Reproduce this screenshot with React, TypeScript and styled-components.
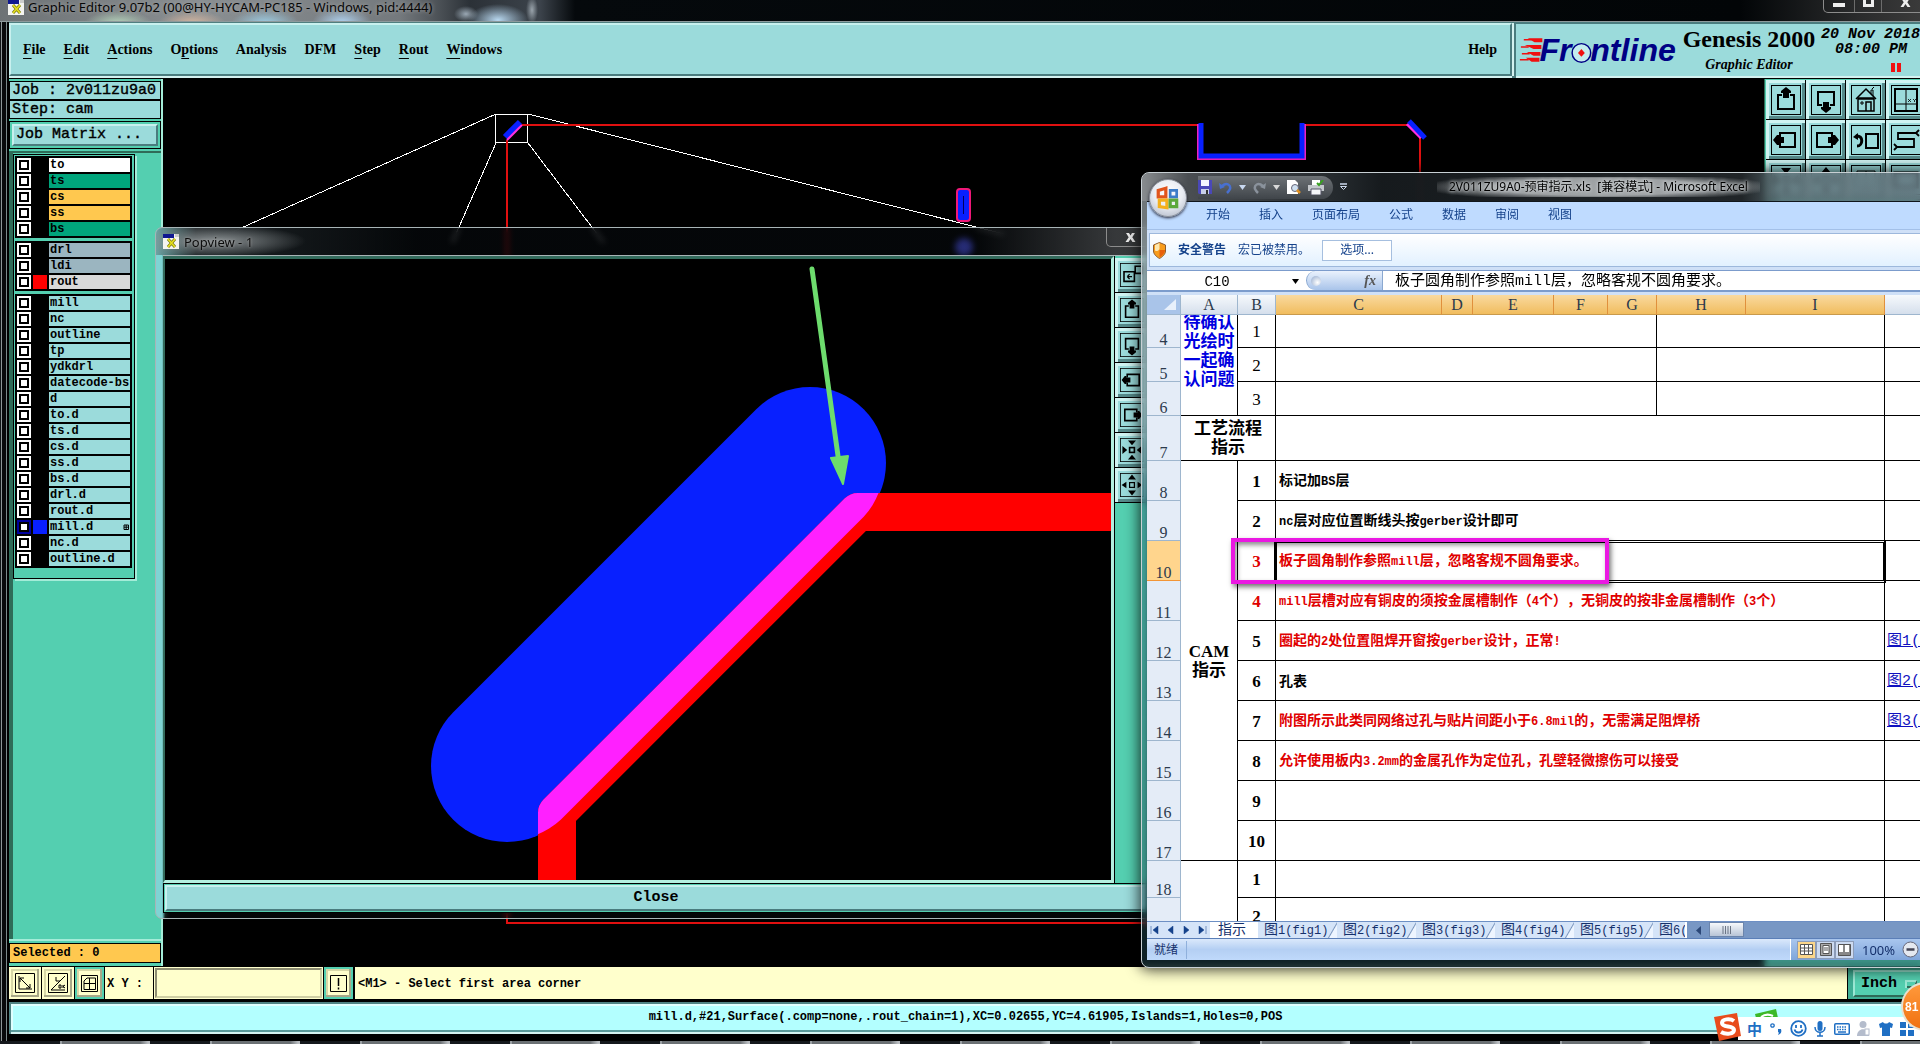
import React, { ReactNode } from 'react';
import styled, { createGlobalStyle, css } from 'styled-components';

const mono = `"Liberation Mono", monospace`;
const serif = `"Liberation Serif", serif`;
const ui = `"Noto Sans", "Noto Sans CJK SC", sans-serif`;
const song = `"Liberation Mono", "Noto Sans CJK SC", monospace`;

const aqua = '#9bdbdb';
const teal = '#54cfb0';
const cream = '#ffffcc';

const Global = createGlobalStyle`
  *, *::before, *::after { box-sizing: border-box; }
  body { margin: 0; background: #000; overflow: hidden; }
  button, input, select { margin: 0; border-radius: 0; }
`;

/* ---------- main window ---------- */

const Desktop = styled.div`
  position: relative;
  height: 100vh;
  overflow: hidden;
  display: flex;
  flex-direction: column;
  background: #04070a;
`;

const TitleBar = styled.header`
  flex: none;
  height: 22px;
  padding: 0 0 6px 8px;
  display: flex;
  align-items: flex-start;
  gap: 4px;
  border-bottom: 1px solid #8e9a9c;
  background:
    radial-gradient(ellipse 34px 14px at 118px 24px, #b7d6bd, transparent),
    radial-gradient(ellipse 34px 14px at 192px 24px, #d8b7a0, transparent),
    radial-gradient(ellipse 34px 16px at 265px 24px, #9ed0e8, transparent),
    radial-gradient(ellipse 30px 18px at 342px 24px, #b4d8f8, transparent),
    radial-gradient(ellipse 30px 16px at 498px 20px, #b8d8f0, transparent),
    radial-gradient(ellipse 12px 8px at 466px 14px, #9aa8b4, transparent),
    radial-gradient(ellipse 6px 14px at 532px 10px, #9aa4ac, transparent),
    linear-gradient(90deg, #6d7275 0, #8a8f92 200px, #74797d 400px, #2b3137 470px, #3c434b 540px, #05090c 575px, #020507 calc(100% - 180px), #2a2b2c calc(100% - 60px), #3a3a3a 100%);
`;

const TitleText = styled.span`
  flex: 1;
  font: 13px/14px ${ui};
  color: #060606;
  white-space: pre;
  text-shadow: 0 0 4px #aaa;
`;

const CaptionButtons = styled.div`
  display: flex;
  height: 13px;
  margin-right: -10px;
  border: 1px solid #8c8c8c;
  border-top: 0;
  border-radius: 0 0 5px 5px;
`;

const CaptionButton = styled.button<{ $w: number }>`
  width: ${p => p.$w}px;
  padding: 0;
  border: 0;
  border-left: 1px solid #6c6c6c;
  background: transparent;
  color: #eee;
  display: flex;
  align-items: flex-start;
  justify-content: center;
  &:first-child { border-left: 0; }
`;

const WindowBody = styled.main`
  flex: 1;
  min-height: 0;
  display: flex;
  flex-direction: column;
  padding: 0 0 7px 9px;
  background: linear-gradient(90deg, #101416 0 1px, #8e9698 1px 2px, #08090b 2px 6px, #7d8a8c 6px 7px, #000 7px);
`;

const Head = styled.div`
  flex: none;
  height: 57px;
  display: flex;
  background: #4f7f80;
  border-bottom: 1px solid #000;
`;

const raised = css`
  border-style: solid;
  border-width: 2px;
  border-color: #c8f0ee #4a7c7e #4a7c7e #c8f0ee;
`;

const MenuBar = styled.nav`
  flex: 1;
  min-width: 0;
  display: flex;
  align-items: center;
  gap: 18px;
  padding: 0 13px 0 12px;
  margin: 1px 2px 2px 0;
  background: ${aqua};
  ${raised}
  box-shadow: 0 2px 0 #d4f2f0, 2px 0 0 #d4f2f0;
`;

const MenuItem = styled.button<{ $end?: boolean }>`
  padding: 0;
  border: 0;
  background: transparent;
  color: #000;
  font: bold 14px/20px ${serif};
  margin-left: ${p => (p.$end ? 'auto' : '0')};
  u { text-underline-offset: 4px; text-decoration-thickness: 1px; }
`;

const Brand = styled.section`
  flex: none;
  width: 406px;
  display: flex;
  overflow: hidden;
  background: ${aqua};
  border: 2px solid #4a7c7e;
  border-width: 2px 0 0 2px;
  box-shadow: inset 0 -2px 0 #d4f2f0;
`;

const BrandTitle = styled.div`
  flex: none;
  width: 138px;
  display: flex;
  flex-direction: column;
  align-items: center;
  color: #000;
  strong { font: bold 24px/30px ${serif}; }
  em { font: italic bold 14px/22px ${serif}; }
`;

const Clock = styled.time`
  display: flex;
  flex-direction: column;
  padding: 3px 0 0 3px;
  font: italic bold 15px/15px ${mono};
  color: #000;
  white-space: nowrap;
  span:nth-child(2) { padding-left: 14px; }
  svg { margin: 6px 0 0 70px; }
`;

const Work = styled.div`
  flex: 1;
  min-height: 0;
  display: grid;
  grid-template-columns: 154px minmax(0, 1fr) 156px;
`;

const Sidebar = styled.aside`
  display: flex;
  flex-direction: column;
  min-height: 0;
  background: ${teal};
  border-right: 2px solid #a4ecd8;
`;

const Info = styled.div`
  height: 19px;
  padding-left: 2px;
  border: 1px solid #000;
  background: ${aqua};
  font: 15px/18px ${mono};
  -webkit-text-stroke: 0.4px #000;
  white-space: nowrap;
  overflow: hidden;
  &:first-child { margin-top: 2px; }
`;

const MatrixFrame = styled.div`
  margin: 2px 0;
  padding: 2px;
  border: 1px solid #000;
`;

const MatrixButton = styled.button`
  display: block;
  width: 100%;
  height: 22px;
  padding: 0 2px;
  ${raised}
  background: ${aqua};
  font: 15px/18px ${mono};
  -webkit-text-stroke: 0.4px #000;
  color: #000;
  text-align: left;
`;

const Tray = styled.div`
  flex: 1;
  border-top: 2px solid #2f6b58;
  border-left: 4px solid #2f6b58;
  padding-top: 1px;
`;

const LayerFrame = styled.div`
  width: 122px;
  height: 425px;
  border: 1px solid #000;
  padding: 1px;
  display: flex;
  flex-direction: column;
  gap: 3px;
  box-shadow: 2px 2px 0 #a4ecd8;
`;

const LayerGroup = styled.ul`
  list-style: none;
  margin: 0;
  width: 117px;
  padding: 1px 0;
  background: #000;
`;

const LayerRow = styled.li`
  display: flex;
  align-items: center;
  height: 16px;
  padding-left: 2px;
  gap: 2px;
`;

const LayerCheck = styled.input<{ $on?: boolean }>`
  appearance: none;
  flex: none;
  width: 14px;
  height: 14px;
  border: 2px solid ${p => (p.$on ? '#0000a0' : '#fff')};
  background: #fff;
  box-shadow: inset 0 0 0 2px #000;
`;

const Swatch = styled.span<{ $c: string }>`
  flex: none;
  width: 14px;
  height: 14px;
  background: ${p => p.$c};
`;

const LayerName = styled.label<{ $c: string }>`
  width: 81px;
  height: 14px;
  padding-left: 1px;
  display: flex;
  align-items: center;
  justify-content: space-between;
  background: ${p => p.$c};
  font: bold 12px/14px ${mono};
  color: #000;
`;

const Selected = styled.div`
  height: 20px;
  margin: 2px 0 3px;
  padding-left: 3px;
  border: 1px solid #000;
  background: #ffc84f;
  font: bold 12px/18px ${mono};
`;

const TrayEdge = styled.div`
  height: 2px;
  background: #a4ecd8;
`;

const Canvas = styled.svg`
  display: block;
  width: 100%;
  height: 100%;
  background: #000;
`;

const ToolGrid = styled.div`
  overflow: hidden;
  padding: 1px 0 0 1px;
  border-left: 1px solid #2f6b58;
  background: ${teal};
  display: grid;
  grid-template-columns: repeat(4, 40px);
  grid-auto-rows: 40px;
`;

const ToolButton = styled.button<{ $s: number }>`
  width: ${p => p.$s}px;
  height: ${p => p.$s}px;
  padding: 0;
  border: 1px solid #000;
  border-width: 0 1px 1px 0;
  background: ${aqua};
  box-shadow: inset 3px 3px 0 #d0f4f2, inset -3px -3px 0 #568a8a;
  display: flex;
  align-items: center;
  justify-content: center;
  color: #000;
`;

/* ---------- command and status lines ---------- */

const CommandRow = styled.form`
  flex: none;
  height: 35px;
  margin: 0;
  display: flex;
  gap: 1px;
  padding: 1px 0 2px;
  background: #000;
`;

const CommandButton = styled.button<{ $green?: boolean }>`
  width: ${p => (p.$green ? 29 : 32)}px;
  padding: 0;
  border: 2px solid ${p => (p.$green ? teal : cream)};
  background: ${cream};
  box-shadow: inset -2px -2px 0 #a8a888, inset 2px 2px 0 #d8d8a8;
  display: flex;
  align-items: center;
  justify-content: center;
  color: #000;
`;

const CoordLabel = styled.label`
  width: 48px;
  padding-left: 2px;
  background: ${cream};
  font: bold 12px/34px ${mono};
  white-space: pre;
`;

const CoordField = styled.input`
  width: 169px;
  padding: 0 4px;
  border: 3px solid #8c8c70;
  border-color: #8c8c70 #cfcfa4 #cfcfa4 #8c8c70;
  outline: 1px solid ${cream};
  outline-offset: -1px;
  background: ${cream};
  font: 12px/20px ${mono};
`;

const Prompt = styled.output`
  flex: 1;
  min-width: 0;
  padding-left: 3px;
  margin-left: 1px;
  background: ${cream};
  font: bold 12px/34px ${mono};
`;

const UnitBox = styled.label`
  position: relative;
  width: 72px;
  display: flex;
  padding: 3px 0 2px 5px;
  background: #3fae94;
  svg { position: absolute; right: 3px; top: 13px; }
`;

const UnitSelect = styled.select`
  appearance: none;
  width: 100%;
  padding: 0 0 0 6px;
  border: 2px solid #9be8d4;
  border-bottom-color: #2f6b58;
  border-right: 0;
  background: ${teal};
  color: #000;
  font: bold 15px/20px ${mono};
`;

const StatusLine = styled.output`
  flex: none;
  height: 32px;
  margin: 1px 0 0;
  display: block;
  border: 2px solid #4f8384;
  border-right: 0;
  border-bottom: 0;
  background: #b3ffff;
  box-shadow: inset 0 -2px 0 #d4f2f0, inset 0 -4px 0 #5a9a9a, inset 2px 2px 0 #e0ffff;
  font: bold 12px/26px ${mono};
  text-align: center;
  color: #000;
`;

const Taskbar = styled.footer`
  flex: none;
  height: 3px;
  background: repeating-linear-gradient(90deg, #14181c 0 60px, #9aa0a4 60px 62px, #6b7074 62px 140px, #b8bcc0 148px 150px);
`;

/* ---------- popview window ---------- */

const PopWindow = styled.section`
  position: absolute;
  left: 155px;
  top: 227px;
  bottom: 125px;
  width: 1003px;
  display: flex;
  flex-direction: column;
  padding: 0 8px 5px 7px;
  border: 1px solid #a8b4b6;
  border-radius: 7px;
  background: linear-gradient(90deg, #7fd4d4 0 6px, rgba(10, 16, 20, 0.35) 9px);
  backdrop-filter: blur(3px);
  overflow: hidden;
`;

const PopTitle = styled.header`
  flex: none;
  height: 27px;
  margin: 0 -8px 0 -7px;
  padding: 0 0 0 7px;
  display: flex;
  align-items: center;
  gap: 5px;
  background:
    radial-gradient(ellipse 90px 16px at 60px 13px, #8b9193, transparent),
    linear-gradient(90deg, #6ca4a4 0, #1d2326 40px, rgba(6, 9, 12, 0.35) 260px, rgba(6, 9, 12, 0.35) 820px, rgba(60, 62, 64, 0.9) 960px);
  span { flex: 1; font: 13px/16px ${ui}; color: #0c0c0c; text-shadow: 0 0 3px #aaa; }
`;

const PopClose = styled.button`
  align-self: flex-start;
  width: 48px;
  height: 19px;
  padding: 0;
  margin-right: 3px;
  border: 1px solid #8c8c8c;
  border-top: 0;
  border-radius: 0 0 5px 5px;
  background: transparent;
`;

const PopBody = styled.div`
  flex: 1;
  min-height: 0;
  display: flex;
  border-top: 1px solid #a8b4b6;
  background: ${teal};
`;

const PopView = styled.div`
  flex: 1;
  min-width: 0;
  border-style: solid;
  border-width: 3px;
  border-left-width: 2px;
  border-color: #336b5c #b4f0e0 #b4f0e0 #336b5c;
`;

const PopTools = styled.div`
  width: 35px;
  display: flex;
  flex-direction: column;
  padding-top: 2px;
  border-left: 1px solid #000;
`;

const PopFoot = styled.div`
  flex: none;
  height: 30px;
  padding: 1px;
  background: ${teal};
  border: 1px solid #000;
  button {
    display: block;
    width: 100%;
    height: 26px;
    padding: 0;
    background: ${aqua};
    ${raised}
    font: bold 15px/20px ${mono};
    color: #000;
  }
`;

/* ---------- spreadsheet window ---------- */

const XlWindow = styled.section`
  position: absolute;
  left: 1141px;
  right: -16px;
  top: 172px;
  bottom: 76px;
  display: flex;
  flex-direction: column;
  padding: 0 0 7px 5px;
  border: 1px solid #c8d0d4;
  border-radius: 8px;
  background: linear-gradient(180deg, rgba(150, 156, 160, 0.75) 0, rgba(140, 170, 175, 0.75) 240px, rgba(50, 120, 130, 0.55) 330px, rgba(30, 70, 80, 0.45) 100%);
  backdrop-filter: blur(3px);
  box-shadow: 0 0 14px 2px rgba(0, 0, 0, 0.75);
`;

const XlTitle = styled.header`
  flex: none;
  height: 28px;
  margin-left: -5px;
  padding-left: 56px;
  display: flex;
  align-items: center;
  border-radius: 8px 8px 0 0;
  background: linear-gradient(90deg, #888c8f 0, #4a4e52 46px, #23282c 200px, rgba(2, 6, 9, 0.82) 240px, rgba(2, 6, 9, 0.72) 600px, rgba(30, 60, 70, 0.4) 640px, rgba(40, 70, 85, 0.4) 100%);
`;

const Orb = styled.button`
  position: absolute;
  left: 7px;
  top: 6px;
  width: 38px;
  height: 38px;
  padding: 0;
  border: 1px solid #8a8f98;
  border-radius: 50%;
  background: radial-gradient(circle at 50% 35%, #fff 0, #e8ebf2 50%, #a8b0c0 100%);
  box-shadow: 0 1px 3px #223;
  display: flex;
  align-items: center;
  justify-content: center;
`;

const Quick = styled.div`
  width: 135px;
  height: 23px;
  display: flex;
  align-items: center;
  gap: 7px;
  border-radius: 0 12px 12px 0;
  background: linear-gradient(180deg, #6d7276, #40454a);
  button { padding: 0; border: 0; background: none; display: flex; }
`;

const XlName = styled.h1`
  margin: 0 0 0 90px;
  padding: 0 12px;
  font: 12px/20px ${ui};
  white-space: pre;
  color: #000;
  text-shadow: 0 0 5px #d8dcde, 0 0 3px #d8dcde;
  background: radial-gradient(ellipse 55% 70% at 50% 50%, rgba(200, 204, 206, 0.75) 60%, transparent 100%);
`;

const MoreMark = styled.span`
  display: flex;
  margin-left: 7px;
`;

const XlBody = styled.div`
  flex: 1;
  min-height: 0;
  display: flex;
  flex-direction: column;
  background: #cfe0f7;
  border-top: 1px solid #10161c;
`;

const Tabs = styled.nav`
  flex: none;
  height: 28px;
  padding: 0 0 2px 59px;
  display: flex;
  align-items: center;
  gap: 29px;
  background: #bfdbff;
  border-bottom: 1px solid #a3c0e8;
  button { padding: 0; border: 0; background: none; font: 12px/18px ${ui}; color: #15428b; }
`;

const Alert = styled.div`
  flex: none;
  height: 34px;
  margin: 3px 0 3px 2px;
  padding-left: 3px;
  display: flex;
  align-items: center;
  gap: 12px;
  border: 1px solid #9db8dc;
  background: linear-gradient(180deg, #fff, #e2f1ff);
  font: 12px/18px ${ui};
  color: #15428b;
  button {
    width: 70px;
    height: 21px;
    padding: 0;
    border: 1px solid #a6bfdf;
    background: #fff;
    color: #15428b;
    font: 12px/18px ${ui};
  }
`;

const FormulaBar = styled.div`
  flex: none;
  height: 22px;
  margin-bottom: 3px;
  display: flex;
  border: 1px solid #7c9ccc;
  border-width: 1px 0 2px;
  background: #fff;
`;

const NameBox = styled.input`
  width: 140px;
  padding: 2px 0 0;
  border: 0;
  background: #fff;
  text-align: center;
  font: 14px/18px ${mono};
`;

const FxPill = styled.button`
  width: 77px;
  margin-left: 4px;
  padding: 0 6px 0 4px;
  display: flex;
  align-items: center;
  justify-content: space-between;
  border: 1px solid #8aa8d0;
  border-width: 0 1px 0 1px;
  border-radius: 10px 0 0 10px;
  background: linear-gradient(180deg, #eaf2fd, #a9c4ea);
  font: italic bold 14px/16px ${serif};
  color: #555;
`;

const Knob = styled.i`
  width: 10px;
  height: 10px;
  border-radius: 50%;
  background: radial-gradient(circle at 65% 65%, #fff, #90a8cc);
`;

const FormulaField = styled.input`
  flex: 1;
  min-width: 0;
  padding: 2px 0 0 12px;
  border: 0;
  background: #fff;
  font: 15px/17px ${song};
  color: #000;
`;

const SheetArea = styled.div`
  position: relative;
  flex: 1;
  min-height: 0;
  overflow: hidden;
  background: #fff;
`;

const Grid = styled.table`
  table-layout: fixed;
  width: 797px;
  border-collapse: separate;
  border-spacing: 0;
  color: #000;
  text-spacing-trim: space-all;
`;

const ColHead = styled.th<{ $hot?: boolean }>`
  height: 20px;
  padding: 1px 0 0;
  font: 16px/18px ${serif};
  color: #2c3a4c;
  border-right: 1px solid ${p => (p.$hot ? '#e0903c' : '#9eb6ce')};
  border-bottom: 1px solid ${p => (p.$hot ? '#c99a4c' : '#9eb6ce')};
  background: ${p => (p.$hot ? 'linear-gradient(180deg, #f9d99f, #f1bd5e)' : 'linear-gradient(180deg, #f6f9fc, #d5dfec)')};
`;

const CornerHead = styled.th`
  padding: 0 4px 0 0;
  border-bottom: 1px solid #9eb6ce;
  border-right: 1px solid #9eb6ce;
  background: #a9c4e9;
  text-align: right;
  svg { display: block; margin-left: auto; }
`;

const RowHead = styled.th<{ $h: number; $hot?: boolean }>`
  height: ${p => p.$h}px;
  padding: 0;
  vertical-align: bottom;
  font: 16px/14px ${serif};
  color: #2c3a4c;
  background: ${p => (p.$hot ? '#ffd58d' : '#e4ecf7')};
  border-right: 1px solid #9eb6ce;
  border-bottom: 1px solid ${p => (p.$hot ? '#f29536' : '#9eb6ce')};
`;

const Cell = styled.td<{ $red?: boolean }>`
  padding: 2px 0 0 3px;
  border-right: 1px solid #000;
  border-bottom: 1px solid #000;
  font: bold 14px/20px ${song};
  color: ${p => (p.$red ? '#e00000' : '#000')};
  white-space: nowrap;
  overflow: hidden;
`;

const NumCell = styled(Cell)<{ $plain?: boolean }>`
  padding: 2px 0 0;
  text-align: center;
  font: ${p => (p.$plain ? 'normal' : 'bold')} 17px/20px ${serif};
`;

const GroupCell = styled(Cell)<{ $blue?: boolean }>`
  padding: 0;
  text-align: center;
  white-space: normal;
  vertical-align: ${p => (p.$blue ? 'top' : 'middle')};
  font: bold 17px/19px "Liberation Serif", "Noto Sans CJK SC", serif;
  color: ${p => (p.$blue ? '#0000e0' : '#000')};
`;

const ScrolledText = styled.div`
  margin-top: -2px;
`;

const LinkCell = styled(Cell)`
  padding-left: 2px;
  border-right: 0;
  font-weight: normal;
  font-size: 15px;
  a { color: #1010c0; }
`;

const Latin = styled.span`
  font-size: 12px;
`;

const Selection = styled.div`
  position: absolute;
  left: 127px;
  top: 245px;
  width: 612px;
  height: 43px;
  border: 3px double #000;
`;

const Callout = styled.div`
  position: absolute;
  left: 84px;
  top: 243px;
  width: 378px;
  height: 46px;
  border: 4px solid #ea18e2;
  box-shadow: 2px 3px 5px rgba(0, 0, 0, 0.55), inset 2px 3px 5px rgba(0, 0, 0, 0.45);
`;

const SheetBar = styled.div`
  flex: none;
  height: 17px;
  display: flex;
  background: #7897c4;
  border-top: 1px solid #6d8fc4;
  overflow: hidden;
`;

const SheetNav = styled.div`
  width: 63px;
  display: flex;
  align-items: center;
  justify-content: space-around;
  background: #d5e4f8;
  button { padding: 0; border: 0; background: none; display: flex; }
`;

const SheetTab = styled.button<{ $on?: boolean }>`
  flex: none;
  width: ${p => (p.$on ? 48 : 79)}px;
  padding: 1px 0 0 ${p => (p.$on ? 8 : 6)}px;
  border: 0;
  text-align: left;
  white-space: nowrap;
  font: 14px/15px ${song};
  color: #15306b;
  background: ${p => (p.$on ? '#fff' : 'linear-gradient(120deg, #d5e4f8 0 68px, #7c98c0 69px, #eef5ff 70px)')};
`;

const TabStrip = styled.div`
  width: 477px;
  display: flex;
  overflow: hidden;
  border-right: 2px solid #fff;
`;

const ScrollLeft = styled.button`
  width: 22px;
  padding: 0;
  border: 0;
  background: transparent;
  display: flex;
  align-items: center;
  justify-content: center;
`;

const ScrollThumb = styled.div`
  width: 35px;
  margin: 0 0 1px;
  border: 1px solid #6a84ac;
  background: linear-gradient(180deg, #f6f8fb, #b8c4d6);
  display: flex;
  align-items: center;
  justify-content: center;
`;

const XlStatus = styled.footer`
  flex: none;
  height: 22px;
  display: flex;
  align-items: center;
  background: linear-gradient(180deg, #dbe9fb, #b4cff3 50%, #bfd9fb);
  border-top: 1px solid #5b7fb8;
  font: 12px/18px ${ui};
  color: #15306b;
`;

const StatusWord = styled.span`
  width: 40px;
  padding-left: 7px;
  border-right: 1px solid #8fb0dc;
`;

const ViewTools = styled.div`
  margin-left: auto;
  width: 145px;
  height: 100%;
  padding-left: 6px;
  display: flex;
  align-items: center;
  border-left: 1px solid #fff;
  background: linear-gradient(180deg, #a9c6ee, #7fa5da);
  span { width: 48px; padding-left: 8px; font-size: 13px; }
`;

const ViewButton = styled.button<{ $on?: boolean }>`
  width: 19px;
  height: 18px;
  padding: 0;
  border: 1px solid #8c9cb8;
  background: ${p => (p.$on ? '#fbd68a' : '#ccdaf0')};
  display: flex;
  align-items: center;
  justify-content: center;
`;

/* ---------- input method bar ---------- */

const ImeBar = styled.div`
  position: absolute;
  right: 0;
  bottom: 4px;
  width: 182px;
  height: 23px;
  padding: 0 2px 0 6px;
  display: flex;
  align-items: center;
  justify-content: space-between;
  background: #fff;
  color: #1f6fc4;
  button { padding: 0; border: 0; background: none; width: 21px; display: flex; justify-content: center; color: inherit; font: bold 15px/20px "Noto Sans CJK SC", sans-serif; }
`;

const ImeLogo = styled.svg`
  position: absolute;
  right: 177px;
  bottom: 2px;
`;

const ImeLeaf = styled.svg`
  position: absolute;
  right: 141px;
  bottom: 26px;
`;

const Ball = styled.button`
  position: absolute;
  right: -30px;
  bottom: 13px;
  width: 49px;
  height: 49px;
  padding: 0 0 0 2px;
  border: 2px solid #e8e0d0;
  border-radius: 50%;
  background: linear-gradient(180deg, #ff9a3c, #f07010);
  color: #fff;
  text-align: left;
  font: bold 12px/20px "Liberation Sans", sans-serif;
`;

/* ---------- drawings ---------- */

const XIcon = () => (
  <svg width="16" height="15" viewBox="0 0 16 15">
    <rect width="16" height="15" fill="#f4f4f0" />
    <rect width="11" height="4" fill="#101890" />
    <rect x="12" width="4" height="3" fill="#ccc" />
    <path d="M5 5l7 8M12 5l-7 8" stroke="#7a7a10" strokeWidth="3" />
    <path d="M5 5l7 8M12 5l-7 8" stroke="#e6e020" strokeWidth="1.6" />
  </svg>
);

const CloseX = () => (
  <svg width="11" height="9" viewBox="0 0 11 9">
    <path d="M1 0h3l1.500 2.500L7 0h3L7.300 4.300 10.500 9h-3L5.500 6 3.500 9h-3l3.200-4.700z" fill="#eee" />
  </svg>
);

type Glyph = 'up' | 'down' | 'left' | 'right' | 'home' | 'xy' | 'undo' | 'snake' | 'in' | 'out' | 'pan' | 'bar' | 'copy';

const glyphs: Record<Glyph, ReactNode> = {
  up: <><path d="M11 10H7v14h16V10h-4" fill="none" stroke="currentColor" strokeWidth="2" /><path d="M15 2l5 4v2h-2v5h-6V8h-2V6z" fill="currentColor" /></>,
  down: <><path d="M11 20H7V7h16v13h-4" fill="none" stroke="currentColor" strokeWidth="2" /><path d="M15 28l5-4v-2h-2v-5h-6v5h-2v2z" fill="currentColor" /></>,
  left: <><path d="M9 12V8h15v14H9v-4" fill="none" stroke="currentColor" strokeWidth="2" /><path d="M2 15l4-5h2v2h5v6H8v2H6z" fill="currentColor" /></>,
  right: <><path d="M21 12V8H6v14h15v-4" fill="none" stroke="currentColor" strokeWidth="2" /><path d="M28 15l-4-5h-2v2h-5v6h5v2h2z" fill="currentColor" /></>,
  home: <><path d="M5 14L15 4l10 10" fill="none" stroke="currentColor" strokeWidth="1.500" /><path d="M7 13h16v13H7zM7 14h16M15 26v-9h5v9" fill="none" stroke="currentColor" strokeWidth="1.500" /><path d="M10 17h2v2h-2zM20 9V5h2v6M21 4l2-2" fill="none" stroke="currentColor" /></>,
  xy: <><rect x="4" y="4" width="22" height="22" fill="none" stroke="currentColor" strokeWidth="2" /><path d="M15 4v22M4 19h22" stroke="currentColor" fill="none" /><path d="M17 14l3 3m0-3l-3 3M22 14l1.500 1.500L25 14m-1.500 1.500V17" stroke="currentColor" strokeWidth="0.800" fill="none" /></>,
  undo: <><path d="M15 9h12v14H15z" fill="none" stroke="currentColor" strokeWidth="2" /><path d="M5 11c8-1 7 10 1 10" fill="none" stroke="currentColor" strokeWidth="3" /><path d="M2 12l5-4v7z" fill="currentColor" /></>,
  snake: <path d="M25 8H7v6h16v8H6M25 8l3-3M25 8l3 3M6 22l-3-3M6 22l-3 3" fill="none" stroke="currentColor" strokeWidth="1.800" />,
  in: <><rect x="12" y="12" width="6" height="6" fill="none" stroke="currentColor" strokeWidth="2" /><path d="M15 9l-5-6h10zM15 21l-5 6h10zM9 15L3 10v10zM21 15l6-5v10z" fill="currentColor" /></>,
  out: <><rect x="12" y="12" width="6" height="6" fill="none" stroke="currentColor" strokeWidth="1.500" /><path d="M15 2l-5 6h10zM15 28l-5-6h10zM2 15l6-4v8zM28 15l-6-4v8z" fill="currentColor" /></>,
  pan: <path d="M6 6h18v18H6zM15 6v18" fill="none" stroke="currentColor" />,
  bar: <path d="M4 8h22v14H4z" fill="none" stroke="currentColor" strokeWidth="3" />,
  copy: <><path d="M5 11h13v12H5zM19 4h9v9h-9z" fill="none" stroke="currentColor" strokeWidth="2" /><path d="M9 17h6M9 17l3-3M9 17l3 3" fill="none" stroke="currentColor" strokeWidth="1.500" /></>,
};

const ToolIcon = ({ name, size = 30 }: { name: Glyph; size?: number }) => (
  <svg width={size} height={size} viewBox="0 0 30 30">
    <rect x="0.5" y="0.5" width="29" height="29" fill="none" stroke="currentColor" />
    {glyphs[name]}
  </svg>
);

const FrontlineLogo = () => (
  <svg width="168" height="48" viewBox="0 0 168 48" role="img" aria-label="Frontline">
    <path d="M12 14h15v4H19zM9 21h17v4H18zM11 28h14v4H18zM10 34h14v4H16z" fill="#f01010" />
    <path d="M8 15.500h8M5 23h8M6 30h8M4 36h9" stroke="#f01010" strokeWidth="1.500" />
    <g fill="#000084" fontFamily="Liberation Sans, sans-serif" fontWeight="bold" fontStyle="italic" fontSize="33">
      <text x="24" y="37">Fr</text>
      <text x="76" y="37">ntline</text>
    </g>
    <ellipse cx="67" cy="29" rx="9.500" ry="9.500" fill="#c4ecee" stroke="#000084" strokeWidth="1.500" />
    <path d="M67 25l3.500 4-3.500 4-3.500-4z" fill="#f01010" />
  </svg>
);

const BoardDrawing = () => (
  <Canvas>
    <g transform="translate(-163 -79)" fill="none">
      <g stroke="#fff" strokeWidth="1" shapeRendering="crispEdges">
        <rect x="495.500" y="114.500" width="32" height="28" />
        <path d="M496 114L230 233M528 114l476 120M496 143l-44 100M528 143l76 100" />
      </g>
      <path d="M507 140v783h900M522 125h676M1304 125h104M1420 137v200" stroke="#e01010" strokeWidth="2" />
      <path d="M505 137l15-15" stroke="#0820ff" strokeWidth="6" />
      <path d="M507 140l15-15" stroke="#ff30e0" strokeWidth="2" />
      <path d="M1198 124v35h107v-35" stroke="#f020c0" strokeWidth="2" />
      <path d="M1201 123v33h101v-33" stroke="#0820ff" strokeWidth="5" />
      <path d="M1407 124l14 14" stroke="#ff30e0" strokeWidth="3" />
      <path d="M1409 121l16 17" stroke="#0820ff" strokeWidth="5" />
      <rect x="957" y="189" width="13" height="32" rx="3" fill="#0820ff" stroke="#f01878" strokeWidth="2" />
      <path d="M963.500 196v18" stroke="#000060" />
      <circle cx="964" cy="247" r="9" fill="#5058ff" />
    </g>
  </Canvas>
);

const PopDrawing = () => (
  <Canvas>
    <defs>
      <clipPath id="slot">
        <path d="M756.300 408.300L453.300 711.300A76 76 0 0 0 560.700 818.700L863.700 515.700A76 76 0 0 0 756.300 408.300z" />
      </clipPath>
    </defs>
    <g transform="translate(-165 -258)" fill="none" strokeLinejoin="round">
      <path d="M507 765L810 462" stroke="#0820ff" strokeWidth="152" strokeLinecap="round" />
      <path d="M557 900V812L858 511H1130" stroke="#ff0000" strokeWidth="38" />
      <path d="M557 900V812L858 511H1130" stroke="#ff20ff" strokeWidth="38" clipPath="url(#slot)" />
      <path d="M812 268L839 462" stroke="#6ddc6d" strokeWidth="5" strokeLinecap="round" />
      <path d="M831 457l17-2-5 28z" fill="#6ddc6d" stroke="#6ddc6d" strokeWidth="2" />
    </g>
  </Canvas>
);

const Office = () => (
  <svg width="26" height="26" viewBox="0 0 24 24" fill="none" strokeWidth="3">
    <path d="M10 3L3 5v6l7 0z" stroke="#e0541c" />
    <path d="M14 5h6v6h-6z" stroke="#3c7cc8" strokeWidth="2.500" />
    <path d="M4 14h7v7l-7-1z" stroke="#f4b01c" />
    <path d="M14 14h6v6h-6z" stroke="#5ca83c" />
  </svg>
);

const Caret = ({ c = '#c8d8f0' }) => (
  <svg width="7" height="5" viewBox="0 0 7 5"><path d="M0 0h7L3.500 5z" fill={c} /></svg>
);

/* ---------- data ---------- */

type Layer = { name: string; bg: string; swatch?: string; work?: boolean };
const layerGroups: Layer[][] = [
  [
    { name: 'to', bg: '#fff' },
    { name: 'ts', bg: '#00a57c' },
    { name: 'cs', bg: '#ffc84f' },
    { name: 'ss', bg: '#ffc84f' },
    { name: 'bs', bg: '#00a57c' },
  ],
  [
    { name: 'drl', bg: '#9bb5c0' },
    { name: 'ldi', bg: '#9bb5c0' },
    { name: 'rout', bg: '#d9d9d9', swatch: '#ff0000' },
  ],
  ['mill', 'nc', 'outline', 'tp', 'ydkdrl', 'datecode-bs', 'd', 'to.d', 'ts.d', 'cs.d', 'ss.d', 'bs.d', 'drl.d', 'rout.d', 'mill.d', 'nc.d', 'outline.d'].map(name => ({
    name,
    bg: aqua,
    swatch: name === 'mill.d' ? '#0820ff' : undefined,
    work: name === 'mill.d',
  })),
];

const menus: [string, string, string][] = [
  ['', 'F', 'ile'], ['', 'E', 'dit'], ['', 'A', 'ctions'], ['O', 'p', 'tions'],
  ['Analysis', '', ''], ['DFM', '', ''], ['', 'S', 'tep'], ['', 'R', 'out'], ['', 'W', 'indows'],
];

const tools: Glyph[] = ['up', 'down', 'home', 'xy', 'left', 'right', 'undo', 'snake', 'in', 'out', 'pan', 'bar'];
const popTools: Glyph[] = ['copy', 'up', 'down', 'left', 'right', 'in', 'out'];

const columns = [34, 57, 38, 166, 31, 81, 54, 49, 89, 139, 59];

const notes: { n: number; text: string; red?: boolean; link?: string }[] = [
  { n: 1, text: '标记加BS层' },
  { n: 2, text: 'nc层对应位置断线头按gerber设计即可' },
  { n: 3, text: '板子圆角制作参照mill层，忽略客规不圆角要求。', red: true },
  { n: 4, text: 'mill层槽对应有铜皮的须按金属槽制作（4个），无铜皮的按非金属槽制作（3个）', red: true },
  { n: 5, text: '圈起的2处位置阻焊开窗按gerber设计，正常!', red: true, link: '图1(' },
  { n: 6, text: '孔表', link: '图2(' },
  { n: 7, text: '附图所示此类同网络过孔与贴片间距小于6.8mil的，无需满足阻焊桥', red: true, link: '图3(' },
  { n: 8, text: '允许使用板内3.2mm的金属孔作为定位孔，孔壁轻微擦伤可以接受', red: true },
  { n: 9, text: '' },
  { n: 10, text: '' },
];

const Mixed = ({ text }: { text: string }) => (
  <>
    {text.split(/([\x20-\x7e]+)/).map((part, i) => (i % 2 ? <Latin key={i}>{part}</Latin> : part))}
  </>
);

/* ---------- parts ---------- */

const LayerList = () => (
  <LayerFrame>
    {layerGroups.map((group, g) => (
      <LayerGroup key={g}>
        {group.map(l => (
          <LayerRow key={l.name}>
            <LayerCheck type="checkbox" id={`layer-${l.name}`} $on={l.work} defaultChecked={l.work} />
            <Swatch $c={l.swatch ?? '#000'} />
            <LayerName htmlFor={`layer-${l.name}`} $c={l.bg}>
              {l.name}
              {l.work && (
                <svg width="7" height="7" viewBox="0 0 7 7"><path d="M1 1h4.500v4.500H1zM3.200 1v5M1 3.200h5" fill="none" stroke="#000" /></svg>
              )}
            </LayerName>
          </LayerRow>
        ))}
      </LayerGroup>
    ))}
  </LayerFrame>
);

const Popview = () => (
  <PopWindow>
    <PopTitle>
      <XIcon />
      <span>Popview - 1</span>
      <PopClose aria-label="Close window"><CloseX /></PopClose>
    </PopTitle>
    <PopBody>
      <PopView><PopDrawing /></PopView>
      <PopTools>
        {popTools.map(t => (
          <ToolButton key={t} type="button" $s={35} aria-label={t}><ToolIcon name={t} size={24} /></ToolButton>
        ))}
      </PopTools>
    </PopBody>
    <PopFoot><button type="button">Close</button></PopFoot>
  </PopWindow>
);

const Sheet = () => (
  <SheetArea>
    <Grid>
      <colgroup>{columns.map((w, i) => <col key={i} style={{ width: w }} />)}</colgroup>
      <thead>
        <tr>
          <CornerHead><svg width="12" height="12" viewBox="0 0 12 12"><path d="M12 0v11H0z" fill="#e8f0fb" /></svg></CornerHead>
          {['A', 'B', 'C', 'D', 'E', 'F', 'G', 'H', 'I', ''].map((c, i) => (
            <ColHead key={i} $hot={i > 1 && i < 9}>{c}</ColHead>
          ))}
        </tr>
      </thead>
      <tbody>
        {[1, 2, 3].map(n => (
          <tr key={n}>
            <RowHead $h={n === 1 ? 33 : 34}>{n + 3}</RowHead>
            {n === 1 && (
              <GroupCell rowSpan={3} $blue>
                <ScrolledText>待确认<br />光绘时<br />一起确<br />认问题</ScrolledText>
              </GroupCell>
            )}
            <NumCell $plain>{n}</NumCell>
            <Cell colSpan={5} />
            <Cell colSpan={2} />
            <LinkCell />
          </tr>
        ))}
        <tr>
          <RowHead $h={45}>7</RowHead>
          <GroupCell colSpan={2}>工艺流程<br />指示</GroupCell>
          <Cell colSpan={7} />
          <LinkCell />
        </tr>
        {notes.map(note => (
          <tr key={note.n}>
            <RowHead $h={40} $hot={note.n === 3}>{note.n + 7}</RowHead>
            {note.n === 1 && <GroupCell rowSpan={10}>CAM<br />指示</GroupCell>}
            <NumCell $red={note.n === 3 || note.n === 4}>{note.n}</NumCell>
            <Cell colSpan={7} $red={note.red}><Mixed text={note.text} /></Cell>
            <LinkCell>{note.link && <a href="#fig">{note.link}</a>}</LinkCell>
          </tr>
        ))}
        {[1, 2].map(n => (
          <tr key={n}>
            <RowHead $h={37}>{n + 17}</RowHead>
            {n === 1 && <GroupCell rowSpan={2} />}
            <NumCell>{n}</NumCell>
            <Cell colSpan={7} />
            <LinkCell />
          </tr>
        ))}
      </tbody>
    </Grid>
    <Selection />
    <Callout />
  </SheetArea>
);

const Excel = () => (
  <XlWindow>
    <XlTitle>
      <Quick>
        <button aria-label="保存">
          <svg width="14" height="14" viewBox="0 0 14 14"><path d="M0 0h14v14H1l-1-1z" fill="#4a48b8" /><rect x="3" width="8" height="6" fill="#f4f6ff" /><rect x="3" y="9" width="8" height="5" fill="#c8d0e8" /><rect x="8" y="10" width="2" height="4" fill="#333" /></svg>
        </button>
        <button aria-label="撤消">
          <svg width="13" height="13" viewBox="0 0 13 13"><path d="M3 5c5-4 9-1 8 3-1 2-2 3-3 4" fill="none" stroke="#4870d0" strokeWidth="2.500" /><path d="M0 2l1 6 5-2z" fill="#4870d0" /></svg>
        </button>
        <Caret />
        <button aria-label="恢复">
          <svg width="13" height="13" viewBox="0 0 13 13"><path d="M10 5C5 1 1 4 2 8c1 2 2 3 3 4" fill="none" stroke="#8a929c" strokeWidth="2.500" /><path d="M13 2l-1 6-5-2z" fill="#8a929c" /></svg>
        </button>
        <Caret c="#d8d8d8" />
        <button aria-label="打印预览">
          <svg width="14" height="14" viewBox="0 0 14 14"><path d="M0 0h8l3 3v11H0z" fill="#fff" /><circle cx="8" cy="8" r="3.500" fill="#cfe0f0" stroke="#667" /><path d="M10 10l3 3" stroke="#e09020" strokeWidth="2.500" /></svg>
        </button>
        <button aria-label="打印">
          <svg width="16" height="15" viewBox="0 0 16 15"><path d="M4 0h8v5H4z" fill="#fff" /><path d="M0 5h16v6H0z" fill="#c4c8cc" /><path d="M3 9h10v6H3z" fill="#f4f6f8" stroke="#556" /><path d="M9 3l2 2 4-5" fill="none" stroke="#38a020" strokeWidth="2" /></svg>
        </button>
      </Quick>
      <MoreMark>
        <svg width="7" height="8" viewBox="0 0 7 8"><path d="M0 1h7" stroke="#ccd8ec" strokeWidth="1.500" /><path d="M0.500 3.500h6l-3 3z" fill="none" stroke="#ccd8ec" /></svg>
      </MoreMark>
      <XlName>2V011ZU9A0-预审指示.xls  [兼容模式] - Microsoft Excel</XlName>
    </XlTitle>
    <XlBody>
      <Tabs>
        {['开始', '插入', '页面布局', '公式', '数据', '审阅', '视图'].map(t => <button key={t}>{t}</button>)}
      </Tabs>
      <Alert>
        <svg width="13" height="17" viewBox="0 0 13 17"><path d="M6.500 0.500L12.500 3v6c0 3-3 6-6 7.500C3.500 15 0.500 12 0.500 9V3z" fill="#f89c1c" stroke="#8a5a30" /><path d="M6.500 1L2 3v5c0 2 4 1 4.500-1z" fill="#fde8b0" /><path d="M6.500 8h5.500c0 3-3 6-5.500 7.500z" fill="#e8600c" /></svg>
        <strong>安全警告</strong>
        <span>宏已被禁用。</span>
        <button>选项...</button>
      </Alert>
      <FormulaBar>
        <NameBox aria-label="名称框" defaultValue="C10" />
        <svg width="15" height="19" viewBox="0 0 15 19"><path d="M5 8h7l-3.500 5z" fill="#000" /></svg>
        <FxPill type="button"><Knob /><span>fx</span></FxPill>
        <FormulaField aria-label="编辑栏" defaultValue="板子圆角制作参照mill层，忽略客规不圆角要求。" />
      </FormulaBar>
      <Sheet />
      <SheetBar>
        <SheetNav>
          {['M1 0v8M8 0v8L3 4z', 'M7 0v8L2 4z', 'M2 0v8l5-4z', 'M8 0v8M1 0v8l5-4z'].map(d => (
            <button key={d} aria-label="滚动工作表"><svg width="9" height="8" viewBox="0 0 9 8"><path d={d} fill="#15428b" stroke="#15428b" strokeWidth="0.500" /></svg></button>
          ))}
        </SheetNav>
        <TabStrip>
          <SheetTab $on>指示</SheetTab>
          {[1, 2, 3, 4, 5].map(n => <SheetTab key={n}><Mixed text={`图${n}(fig${n})`} /></SheetTab>)}
          <SheetTab><Mixed text="图6(" /></SheetTab>
        </TabStrip>
        <ScrollLeft aria-label="向左滚动"><svg width="5" height="9" viewBox="0 0 5 9"><path d="M5 0v9L0 4.500z" fill="#2c4878" /></svg></ScrollLeft>
        <ScrollThumb><svg width="9" height="8" viewBox="0 0 9 8"><path d="M1 0v8M3.500 0v8M6 0v8M8.500 0v8" stroke="#6a7484" /></svg></ScrollThumb>
      </SheetBar>
      <XlStatus>
        <StatusWord>就绪</StatusWord>
        <ViewTools>
          <ViewButton $on aria-label="普通"><svg width="13" height="11" viewBox="0 0 13 11"><path d="M0.500 0.500h12v10h-12zM0 4h13M0 7h13M4.500 0v11M8.500 0v11" fill="#fff" stroke="#555" /></svg></ViewButton>
          <ViewButton aria-label="页面布局"><svg width="12" height="13" viewBox="0 0 12 13"><path d="M0.500 0.500h11v12h-11z" fill="#aaa" stroke="#555" /><path d="M3 2.500h6v8H3z" fill="#fff" stroke="#555" /><path d="M4 5h4M4 7h4" stroke="#555" /></svg></ViewButton>
          <ViewButton aria-label="分页预览"><svg width="13" height="12" viewBox="0 0 13 12"><path d="M0.500 0.500h12v11h-12z" fill="#888" stroke="#555" /><path d="M1 1h4v7H1zM7 1h4v7H7z" fill="#fff" /></svg></ViewButton>
          <span>100%</span>
          <svg width="17" height="17" viewBox="0 0 17 17"><circle cx="8.500" cy="8.500" r="7.500" fill="#e4e8f0" stroke="#667" /><path d="M4.500 8.500h8" stroke="#445" strokeWidth="2.500" /></svg>
        </ViewTools>
      </XlStatus>
    </XlBody>
    <Orb aria-label="Office"><Office /></Orb>
  </XlWindow>
);

const Ime = () => (
  <>
    <ImeLeaf width="25" height="9" viewBox="0 0 25 9"><path d="M1 5L22 0l2 9H2z" fill="#3cb828" /><path d="M7 8c4-3 8-3 12-1" stroke="#fff" strokeWidth="2" fill="none" /></ImeLeaf>
    <ImeBar>
      <button>中</button>
      <button aria-label="标点"><svg width="12" height="14" viewBox="0 0 12 14"><circle cx="2.500" cy="3.500" r="1.700" fill="none" stroke="currentColor" strokeWidth="1.300" /><path d="M8 7h3c1 3 0 5-3 6 1-2 1-3 0-3z" fill="currentColor" /></svg></button>
      <button aria-label="表情"><svg width="17" height="17" viewBox="0 0 17 17" fill="none" stroke="currentColor" strokeWidth="1.800"><circle cx="8.500" cy="8.500" r="7.300" /><path d="M4.500 9.500c1 4 7 4 8 0M6 5v3M11 5v3" /></svg></button>
      <button aria-label="语音"><svg width="12" height="16" viewBox="0 0 12 16"><rect x="3.500" width="5" height="10" rx="2.500" fill="currentColor" /><path d="M1 6c0 7 10 7 10 0M6 11v4M3 15h6" fill="none" stroke="currentColor" strokeWidth="1.500" /></svg></button>
      <button aria-label="软键盘"><svg width="16" height="12" viewBox="0 0 16 12"><rect x="0.750" y="0.750" width="14.500" height="10.500" rx="1" fill="none" stroke="currentColor" strokeWidth="1.500" /><path d="M3 4h10M3 6.500h10" stroke="currentColor" strokeWidth="1.500" strokeDasharray="1.500 1" /><path d="M4 9h8" stroke="currentColor" strokeWidth="1.500" /></svg></button>
      <button aria-label="用户"><svg width="13" height="15" viewBox="0 0 13 15"><circle cx="6" cy="3.500" r="3.500" fill="#b4bccc" /><path d="M0 15c0-9 12-9 12 0z" fill="#b4bccc" /><rect x="8" y="8" width="4" height="6" fill="#fff" stroke="#b4bccc" /></svg></button>
      <button aria-label="皮肤"><svg width="14" height="14" viewBox="0 0 14 14"><path d="M4 0c1 2 5 2 6 0l4 2-1 4-2-0.500V14H3V5.500L1 6 0 2z" fill="currentColor" /></svg></button>
      <button aria-label="工具箱"><svg width="14" height="14" viewBox="0 0 14 14"><path d="M0 0h6v6H0zM0 8h6v6H0zM8 8h6v6H8z" fill="currentColor" /><rect x="8.700" y="0.700" width="4.600" height="4.600" fill="none" stroke="currentColor" strokeWidth="1.400" /></svg></button>
    </ImeBar>
    <ImeLogo width="30" height="30" viewBox="0 0 30 30">
      <path d="M1 5L24 1l4 23L6 29z" fill="#e84c1c" />
      <path d="M21 9c-4-3-12-2-12 2 0 5 12 2 12 7 0 4-8 5-13 2" fill="none" stroke="#fff" strokeWidth="4" />
    </ImeLogo>
    <Ball>81</Ball>
  </>
);

export default function App() {
  return (
    <Desktop>
      <Global />
      <TitleBar>
        <XIcon />
        <TitleText>Graphic Editor 9.07b2 (00@HY-HYCAM-PC185 - Windows, pid:4444)</TitleText>
        <CaptionButtons>
          <CaptionButton $w={30} aria-label="Minimize"><svg width="12" height="7" viewBox="0 0 12 7"><rect y="3" width="12" height="4" fill="#eee" /></svg></CaptionButton>
          <CaptionButton $w={27} aria-label="Maximize"><svg width="11" height="7" viewBox="0 0 11 7"><path d="M1.500 0v5.500h8V0" fill="none" stroke="#eee" strokeWidth="3" /></svg></CaptionButton>
          <CaptionButton $w={48} aria-label="Close"><svg width="11" height="7" viewBox="0 2 11 7"><path d="M1 0h3l1.500 2.500L7 0h3L7.300 4.300 10.500 9h-3L5.500 6 3.500 9h-3l3.200-4.700z" fill="#eee" /></svg></CaptionButton>
        </CaptionButtons>
      </TitleBar>
      <WindowBody>
        <Head>
          <MenuBar>
            {menus.map(([a, b, c]) => <MenuItem key={a + b}>{a}{b && <u>{b}</u>}{c}</MenuItem>)}
            <MenuItem $end>Help</MenuItem>
          </MenuBar>
          <Brand>
            <FrontlineLogo />
            <BrandTitle><strong>Genesis 2000</strong><em>Graphic Editor</em></BrandTitle>
            <Clock>
              <span>20 Nov 2018</span>
              <span>08:00 PM</span>
              <svg width="11" height="9" viewBox="0 0 11 9"><path d="M0 0h4v9H0zM6 0h4v9H6z" fill="#f01010" /></svg>
            </Clock>
          </Brand>
        </Head>
        <Work>
          <Sidebar>
            <Info>Job : 2v011zu9a0</Info>
            <Info>Step: cam</Info>
            <MatrixFrame><MatrixButton>Job Matrix ...</MatrixButton></MatrixFrame>
            <Tray><LayerList /></Tray>
            <TrayEdge />
            <Selected>Selected : 0</Selected>
          </Sidebar>
          <BoardDrawing />
          <ToolGrid>
            {tools.map(t => <ToolButton key={t} $s={40} aria-label={t}><ToolIcon name={t} /></ToolButton>)}
          </ToolGrid>
        </Work>
        <CommandRow onSubmit={e => e.preventDefault()}>
          <CommandButton type="button" aria-label="Diagonal"><svg width="20" height="20" viewBox="0 0 20 20" fill="none" stroke="currentColor"><path d="M0.500 0.500h19v19h-19zM4 3v13h13M5 5l10 10M5 9V5h4M15 11v4h-4" /></svg></CommandButton>
          <CommandButton type="button" aria-label="Angle"><svg width="20" height="20" viewBox="0 0 20 20" fill="none" stroke="currentColor"><path d="M0.500 0.500h19v19h-19zM3 17L17 3M3 17h14M8 4v4h4M11 12h2v3h-2zM15 12v3M17 12l-2 1.500 2 1.500" /></svg></CommandButton>
          <CommandButton type="button" $green aria-label="Snap grid"><svg width="17" height="17" viewBox="0 0 17 17" fill="none" stroke="currentColor"><path d="M0.500 0.500h16v16h-16zM3 14.500V6l3-3h8.500v11.500zM8.500 3v12M3 8.500h12" /></svg></CommandButton>
          <CoordLabel htmlFor="xy">X Y :</CoordLabel>
          <CoordField id="xy" />
          <CommandButton type="submit" $green aria-label="Apply"><svg width="17" height="17" viewBox="0 0 17 17" fill="none" stroke="currentColor"><path d="M0.500 0.500h16v16h-16z" /><path d="M8.500 3v8M8.500 12.500v2" strokeWidth="1.500" /></svg></CommandButton>
          <Prompt>&lt;M1&gt; - Select first area corner</Prompt>
          <UnitBox>
            <UnitSelect aria-label="Units" defaultValue="Inch"><option>Inch</option><option>mm</option></UnitSelect>
            <svg width="12" height="8" viewBox="0 0 12 8"><path d="M0 0h12v8H0z" fill="#2f6b58" /><path d="M0 0h12L9 5H2v3H0z" fill="#9be8d4" /><path d="M2 2h8v4H2z" fill="#54cfb0" /></svg>
          </UnitBox>
        </CommandRow>
        <StatusLine>mill.d,#21,Surface(.comp=none,.rout_chain=1),XC=0.02655,YC=4.61905,Islands=1,Holes=0,POS</StatusLine>
      </WindowBody>
      <Taskbar />
      <Popview />
      <Excel />
      <Ime />
    </Desktop>
  );
}
